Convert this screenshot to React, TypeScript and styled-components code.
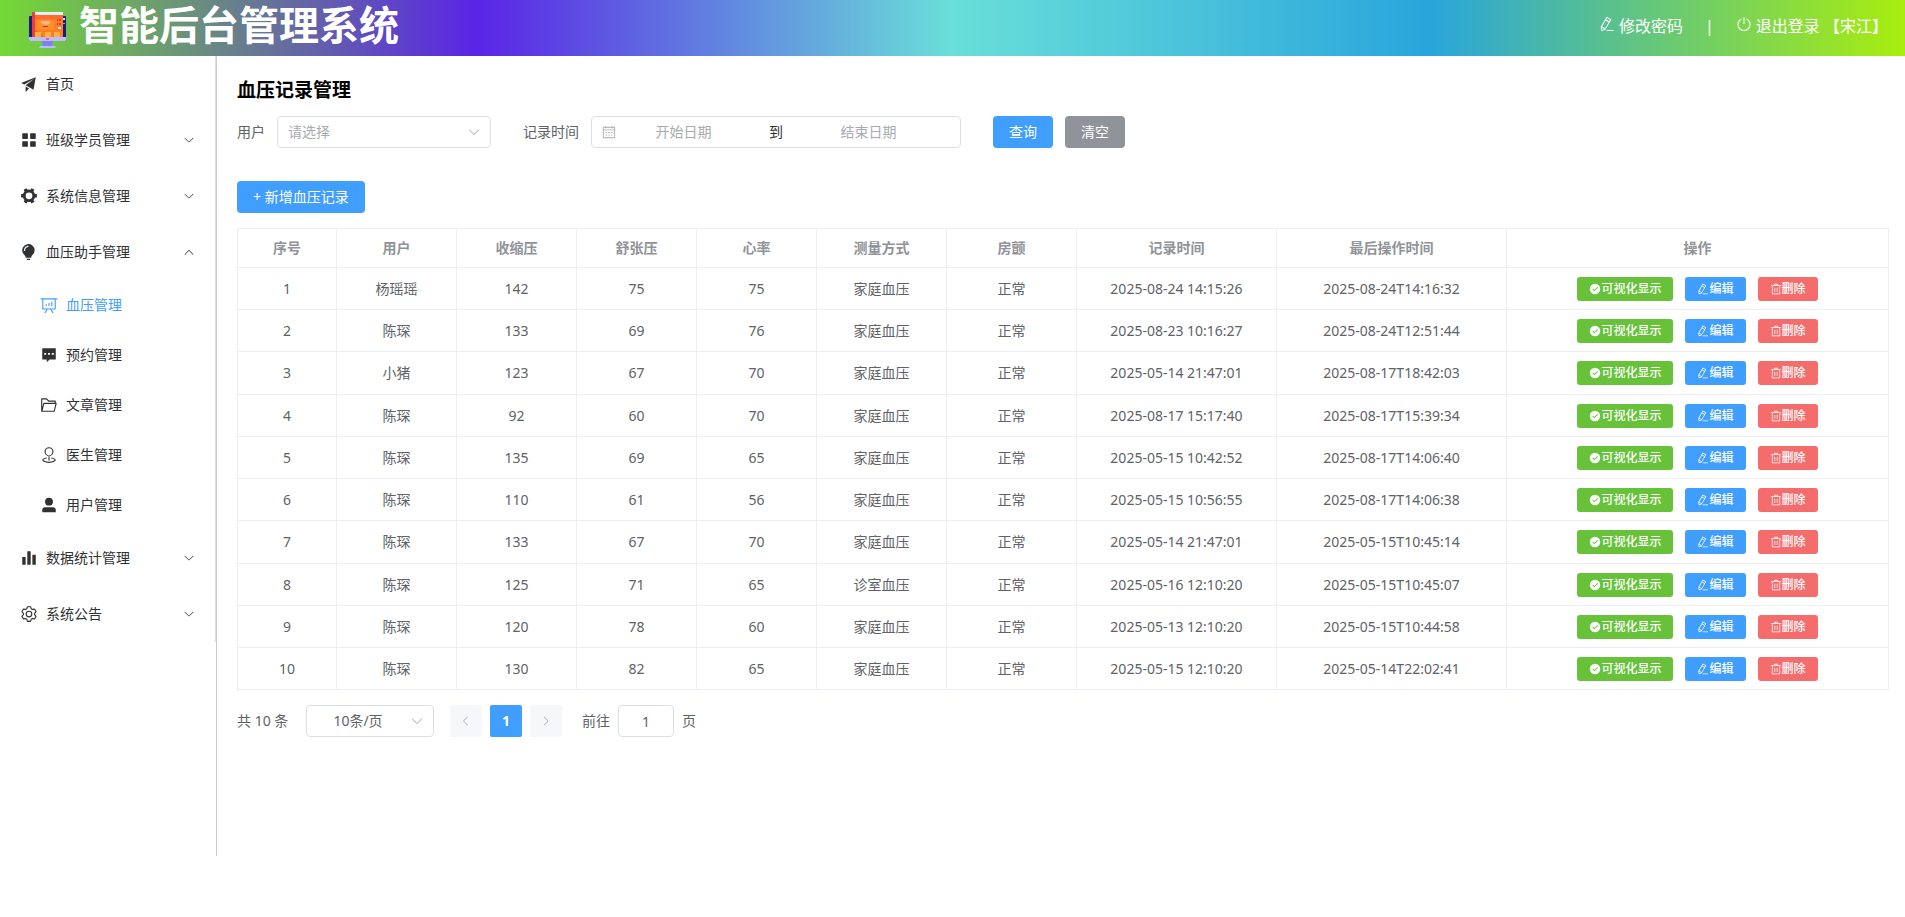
import React, { useState } from "react";
import styled, { createGlobalStyle, css } from "styled-components";

const GlobalStyle = createGlobalStyle`
  *, *::before, *::after { box-sizing: border-box; }
  body {
    margin: 0;
    background: #fff;
    color: #606266;
    font-family: "Noto Sans", "Noto Sans CJK SC", sans-serif;
    font-size: 14px;
    line-height: 20px;
  }
  button, input, select { font: inherit; }
`;

/* ---------- icons ---------- */

const ICONS: Record<string, string> = {
  promotion:
    "m64 448 832-320-128 704-446.08-243.328L832 192 242.816 545.472 64 448zm256 512V657.024L512 768 320 960z",
  menu:
    "M160 448a32 32 0 0 1-32-32V160a32 32 0 0 1 32-32h256a32 32 0 0 1 32 32v256a32 32 0 0 1-32 32H160zm448 0a32 32 0 0 1-32-32V160a32 32 0 0 1 32-32h256a32 32 0 0 1 32 32v256a32 32 0 0 1-32 32H608zM160 896a32 32 0 0 1-32-32V608a32 32 0 0 1 32-32h256a32 32 0 0 1 32 32v256a32 32 0 0 1-32 32H160zm448 0a32 32 0 0 1-32-32V608a32 32 0 0 1 32-32h256a32 32 0 0 1 32 32v256a32 32 0 0 1-32 32H608z",
  tools:
    "M764.416 254.72a351.68 351.68 0 0 1 86.336 149.184H960v192.064H850.752a351.68 351.68 0 0 1-86.336 149.312l54.72 94.72-166.272 96-54.592-94.72a352.64 352.64 0 0 1-172.48 0L371.136 936l-166.272-96 54.72-94.72a351.68 351.68 0 0 1-86.336-149.312H64v-192h109.248a351.68 351.68 0 0 1 86.336-149.312L204.8 160l166.208-96h.192l54.656 94.592a352.64 352.64 0 0 1 172.48 0L652.8 64h.128L819.2 160l-54.72 94.72zM704 499.968a192 192 0 1 0-384 0 192 192 0 0 0 384 0z",
  opportunity:
    "M384 960v-64h192.064v64H384zm448-544a350.656 350.656 0 0 1-128.32 271.424C665.344 719.04 640 763.776 640 813.504V832H320v-14.336c0-48-19.392-95.36-57.216-124.992a351.552 351.552 0 0 1-128.448-344.256c25.344-136.448 133.888-248.128 269.76-276.48A352.384 352.384 0 0 1 832 416zm-544 32c0-132.288 75.904-224 192-224v-64c-154.432 0-256 122.752-256 288h64z",
  board:
    "m665.216 768 110.848 192h-73.856L591.36 768H433.024L322.176 960H248.32l110.848-192H160a32 32 0 0 1-32-32V192H64a32 32 0 0 1 0-64h896a32 32 0 1 1 0 64h-64v544a32 32 0 0 1-32 32H665.216zM832 192H192v512h640V192zM352 448a32 32 0 0 1 32 32v64a32 32 0 0 1-64 0v-64a32 32 0 0 1 32-32zm160-64a32 32 0 0 1 32 32v128a32 32 0 0 1-64 0V416a32 32 0 0 1 32-32zm160-64a32 32 0 0 1 32 32v192a32 32 0 1 1-64 0V352a32 32 0 0 1 32-32z",
  comment:
    "M128 128h768v640H544L384 928V768H128V128zm112 264v112h112V392H240zm216 0v112h112V392H456zm216 0v112h112V392H672z",
  folder:
    "M878.08 448H241.92l-96 384h636.16l96-384zM832 384v-64H485.76L357.504 192H128v448l57.92-231.744A32 32 0 0 1 216.96 384H832zm-24.96 512H96a32 32 0 0 1-32-32V160a32 32 0 0 1 32-32h287.872l128.384 128H864a32 32 0 0 1 32 32v96h23.04a32 32 0 0 1 31.04 39.744l-112 448A32 32 0 0 1 807.04 896z",
  place:
    "M512 512a192 192 0 1 0 0-384 192 192 0 0 0 0 384zm0 64a256 256 0 1 1 0-512 256 256 0 0 1 0 512zM512 512a32 32 0 0 1 32 32v256a32 32 0 1 1-64 0V544a32 32 0 0 1 32-32zM384 649.088v64.96C269.76 732.352 192 771.904 192 800c0 37.696 139.904 96 320 96s320-58.304 320-96c0-28.16-77.76-67.648-192-85.952v-64.96C789.12 671.04 896 730.368 896 800c0 88.32-171.904 160-384 160s-384-71.68-384-160c0-69.696 106.88-128.96 256-150.912z",
  user:
    "M288 320a224 224 0 1 0 448 0 224 224 0 1 0-448 0zm544 608H160a32 32 0 0 1-32-32v-96a160 160 0 0 1 160-160h448a160 160 0 0 1 160 160v96a32 32 0 0 1-32 32z",
  histogram: "M416 896V128h192v768H416zm-288 0V448h192v448H128zm576 0V320h192v576H704z",
  setting:
    "M600.704 64a32 32 0 0 1 30.464 22.208l35.2 109.376c14.784 7.232 28.928 15.36 42.432 24.512l112.384-24.192a32 32 0 0 1 34.432 15.36L944.32 364.8a32 32 0 0 1-4.032 37.504l-77.12 85.12a357.12 357.12 0 0 1 0 49.024l77.12 85.248a32 32 0 0 1 4.032 37.504l-88.704 153.6a32 32 0 0 1-34.432 15.296L708.8 803.904c-13.44 9.088-27.648 17.28-42.368 24.512l-35.264 109.376A32 32 0 0 1 600.704 960H423.296a32 32 0 0 1-30.464-22.208L357.696 828.48a351.616 351.616 0 0 1-42.56-24.64l-112.32 24.256a32 32 0 0 1-34.432-15.36L79.68 659.2a32 32 0 0 1 4.032-37.504l77.12-85.248a357.12 357.12 0 0 1 0-48.896l-77.12-85.248A32 32 0 0 1 79.68 364.8l88.704-153.6a32 32 0 0 1 34.432-15.296l112.32 24.256c13.568-9.152 27.776-17.408 42.56-24.64l35.2-109.312A32 32 0 0 1 423.232 64H600.64zm-23.424 64H446.72l-36.352 113.088-24.512 11.968a294.113 294.113 0 0 0-34.816 20.096l-22.656 15.36-116.224-25.088-65.28 113.152 79.68 88.192-1.92 27.136a293.12 293.12 0 0 0 0 40.192l1.92 27.136-79.808 88.192 65.344 113.152 116.224-25.024 22.656 15.296a294.113 294.113 0 0 0 34.816 20.096l24.512 11.968L446.72 896h130.688l36.48-113.152 24.448-11.904a288.282 288.282 0 0 0 34.752-20.096l22.592-15.296 116.288 25.024 65.28-113.152-79.744-88.192 1.92-27.136a293.12 293.12 0 0 0 0-40.256l-1.92-27.136 79.808-88.128-65.344-113.152-116.288 24.96-22.592-15.232a287.616 287.616 0 0 0-34.752-20.096l-24.448-11.904L577.344 128zM512 320a192 192 0 1 1 0 384 192 192 0 0 1 0-384zm0 64a128 128 0 1 0 0 256 128 128 0 0 0 0-256z",
  down:
    "M831.872 340.864 512 652.672 192.128 340.864a30.592 30.592 0 0 0-42.752 0 29.12 29.12 0 0 0 0 41.6L489.664 714.24a32 32 0 0 0 44.672 0l340.288-331.712a29.12 29.12 0 0 0 0-41.728 30.592 30.592 0 0 0-42.752 0z",
  up:
    "m488.832 344.32-339.84 356.672a32 32 0 0 0 0 44.16l.384.384a29.44 29.44 0 0 0 42.688 0l320-335.872 319.872 335.872a29.44 29.44 0 0 0 42.688 0l.384-.384a32 32 0 0 0 0-44.16L535.168 344.32a32 32 0 0 0-46.336 0z",
  left:
    "M609.408 149.376 277.76 489.6a32 32 0 0 0 0 44.672l331.648 340.352a29.12 29.12 0 0 0 41.728 0 30.592 30.592 0 0 0 0-42.752L339.264 511.936l311.872-319.872a30.592 30.592 0 0 0 0-42.688 29.12 29.12 0 0 0-41.728 0z",
  right:
    "M340.864 149.312a30.592 30.592 0 0 0 0 42.752L652.736 512 340.864 831.872a30.592 30.592 0 0 0 0 42.752 29.12 29.12 0 0 0 41.728 0L714.24 534.336a32 32 0 0 0 0-44.672L382.592 149.376a29.12 29.12 0 0 0-41.728 0z",
  edit:
    "m199.04 672.64 193.984 112 224-387.968-193.92-112-224 388.032zm-23.872 60.16 32.896 148.288 144.896-45.696L175.168 732.8zM455.04 229.248l193.92 112 56.704-98.112-193.984-112-56.64 98.112zM104.32 708.8l384-665.024 304.768 175.936L409.152 884.8h.064l-248.448 78.336L104.32 708.8zm384 254.272v-64h448v64h-448z",
  power:
    "M352 159.872V230.4a352 352 0 1 0 320 0v-70.528A416.128 416.128 0 0 1 512 960a416 416 0 0 1-160-800.128zM512 64a32 32 0 0 1 32 32v384a32 32 0 0 1-64 0V96a32 32 0 0 1 32-32z",
  success:
    "M512 64a448 448 0 1 1 0 896 448 448 0 0 1 0-896zm-55.808 536.384-99.52-99.584a38.4 38.4 0 1 0-54.336 54.336l126.72 126.72a38.272 38.272 0 0 0 54.336 0l262.4-262.464a38.4 38.4 0 1 0-54.272-54.336L456.192 600.384z",
  trash:
    "M160 256H96a32 32 0 0 1 0-64h256V95.936a32 32 0 0 1 32-32h256a32 32 0 0 1 32 32V192h256a32 32 0 1 1 0 64h-64v672a32 32 0 0 1-32 32H192a32 32 0 0 1-32-32V256zm448-64v-64H416v64h192zM224 896h576V256H224v640zm192-128a32 32 0 0 1-32-32V416a32 32 0 0 1 64 0v320a32 32 0 0 1-32 32zm192 0a32 32 0 0 1-32-32V416a32 32 0 0 1 64 0v320a32 32 0 0 1-32 32z",
  calendar:
    "M128 384v512h768V192H768v32a32 32 0 1 1-64 0v-32H320v32a32 32 0 0 1-64 0v-32H128v128h768v64H128zm192-256h384V96a32 32 0 1 1 64 0v32h160a32 32 0 0 1 32 32v768a32 32 0 0 1-32 32H96a32 32 0 0 1-32-32V160a32 32 0 0 1 32-32h160V96a32 32 0 0 1 64 0v32zm-32 384h64a32 32 0 0 1 0 64h-64a32 32 0 0 1 0-64zm0 192h64a32 32 0 1 1 0 64h-64a32 32 0 1 1 0-64zm192-192h64a32 32 0 0 1 0 64h-64a32 32 0 0 1 0-64zm0 192h64a32 32 0 1 1 0 64h-64a32 32 0 1 1 0-64zm192-192h64a32 32 0 1 1 0 64h-64a32 32 0 1 1 0-64zm0 192h64a32 32 0 1 1 0 64h-64a32 32 0 1 1 0-64z",
};

const Svg = styled.svg`
  display: block;
  flex: none;
  fill: currentColor;
`;

function Icon({ name, size }: { name: string; size: number }) {
  return (
    <Svg viewBox="0 0 1024 1024" width={size} height={size} aria-hidden="true">
      <path d={ICONS[name]} fillRule="evenodd" />
    </Svg>
  );
}

function Logo() {
  return (
    <svg width="38" height="38" viewBox="0 0 38 38" aria-hidden="true">
      <rect x="0" y="5" width="37" height="25" rx="1" fill="#191d7c" />
      <rect x="34" y="7" width="2" height="2" fill="#dfe6ff" />
      <rect x="34" y="12" width="2" height="1" fill="#8f9cff" />
      <path d="M4 1h30v3H4z" fill="#e9f0f4" />
      <path d="M3 1h3v26H3z" fill="#ee3b3f" />
      <path d="M6 4h28v23H6z" fill="#ff7c29" />
      <path d="M6 4h28v4H6z" fill="#ff6a2d" />
      <path d="M8 9h17v10H8z" fill="#ff8f26" />
      <path d="M12 10h9c0 3-2 4-4 4s-5-1-5-4z" fill="#ffb19d" />
      <path d="M14 15h5v1h-5z" fill="#c9302c" />
      <path d="M28 8h1v2h-1zM30 8h2v2h-2zM28 12h1v2h-1zM30 12h2v2h-2z" fill="#d83a2e" />
      <rect x="29" y="16" width="3" height="2" fill="#9ff3f5" />
      <path d="M4 18l11 9H3z" fill="#e2452c" />
      <path d="M6 21h6v5H6zM16 21h6v5h-6zM25 21h6v5h-6z" fill="#ffb03a" />
      <path d="M0 26h37v3a1 1 0 0 1-1 1H1a1 1 0 0 1-1-1z" fill="#b9bcff" />
      <rect x="17" y="27" width="3" height="2" fill="#f05a8c" />
      <path d="M13 30h11l-1 5h-9z" fill="#7d80f0" />
      <path d="M11 35h15l1 2H10z" fill="#b9bcff" />
    </svg>
  );
}

/* ---------- header ---------- */

const Header = styled.header`
  display: flex;
  align-items: center;
  justify-content: space-between;
  height: 56px;
  padding: 0 17px 0 29px;
  color: #fff;
  background: linear-gradient(
    90deg,
    #75d935 0%,
    #5a24e6 25%,
    #69dfd9 50%,
    #29a5dc 75%,
    #a9ed0d 100%
  );
`;

const Brand = styled.div`
  display: flex;
  align-items: center;
  gap: 12px;
`;

const LogoBox = styled.span`
  display: flex;
  width: 38px;
  padding-top: 4px;
`;

const BrandName = styled.h1`
  margin: 0;
  padding-bottom: 6px;
  font-size: 40px;
  font-weight: 700;
  line-height: 50px;
`;

const UserNav = styled.nav`
  display: flex;
  align-items: center;
  gap: 22px;
  padding-bottom: 4px;
  font-size: 16px;
  line-height: 24px;
`;

const NavLink = styled.a`
  display: flex;
  align-items: center;
  gap: 4px;
  color: inherit;
  text-decoration: none;
`;

const NavIcon = styled.span`
  padding-bottom: 4px;
`;

/* ---------- side menu ---------- */

const Body = styled.div`
  display: flex;
  align-items: flex-start;
`;

const Sidebar = styled.aside`
  flex: none;
  width: 217px;
  min-height: 800px;
  border-right: 1px solid #ccc;
`;

const MenuList = styled.ul`
  margin: 0;
  padding: 0;
  list-style: none;
  border-right: 1px solid #dcdfe6;
`;

const SubList = styled.ul`
  margin: 0;
  padding: 0;
  list-style: none;
`;

const menuItem = css`
  display: flex;
  align-items: center;
  width: 100%;
  border: 0;
  background: none;
  color: #303133;
  text-align: left;
  text-decoration: none;
  cursor: pointer;
`;

const MenuButton = styled.button`
  ${menuItem}
  height: 56px;
  padding: 0 20px 0 17px;
`;

const MenuLink = styled.a`
  ${menuItem}
  height: 56px;
  padding: 0 20px 0 17px;
`;

const SubLink = styled.a<{ $active: boolean }>`
  ${menuItem}
  height: 50px;
  padding: 0 20px 0 37px;
  color: ${(p) => (p.$active ? "#409eff" : "#303133")};
`;

const MenuIcon = styled.span`
  display: flex;
  justify-content: center;
  width: 24px;
  margin-right: 5px;
`;

const MenuText = styled.span`
  flex: 1;
`;

/* ---------- content ---------- */

const Main = styled.main`
  flex: 1;
  min-width: 0;
  padding: 21px 16px 20px 20px;
`;

const PageTitle = styled.h2`
  margin: 0 0 12px;
  color: #000;
  font-size: 19px;
  font-weight: 700;
  line-height: 27px;
`;

const Filters = styled.form`
  display: flex;
  align-items: center;
  margin-bottom: 33px;
`;

const Field = styled.div`
  display: flex;
  align-items: center;
  gap: 12px;
  margin-right: 32px;
`;

const ButtonGroup = styled.div`
  display: flex;
  justify-content: center;
  gap: 12px;
`;

const SelectBox = styled.span<{ $width: number }>`
  position: relative;
  display: flex;
  width: ${(p) => p.$width}px;
`;

const SelectArrow = styled.span`
  position: absolute;
  top: 9px;
  right: 10px;
  color: #a8abb2;
  pointer-events: none;
`;

const Select = styled.select<{ $centered?: boolean }>`
  appearance: none;
  width: 100%;
  height: 32px;
  padding: 0 ${(p) => (p.$centered ? 32 : 30)}px 0 ${(p) => (p.$centered ? 8 : 10)}px;
  border: 1px solid #dcdfe6;
  border-radius: 4px;
  background: #fff;
  color: ${(p) => (p.$centered ? "#606266" : "#a8abb2")};
  text-align-last: ${(p) => (p.$centered ? "center" : "left")};
`;

const DateRange = styled.div`
  display: flex;
  align-items: center;
  width: 370px;
  height: 32px;
  padding: 0 10px;
  border: 1px solid #dcdfe6;
  border-radius: 4px;
  color: #a8abb2;
`;

const DateInput = styled.input`
  flex: 1;
  min-width: 0;
  padding: 0;
  border: 0;
  outline: 0;
  background: none;
  color: #606266;
  text-align: center;
  &::placeholder {
    color: #a8abb2;
    opacity: 1;
  }
`;

const RangeWord = styled.span`
  width: 50px;
  color: #303133;
  text-align: center;
`;

const ClearSlot = styled.span`
  width: 14px;
`;

const TONES = {
  primary: "#409eff",
  info: "#909399",
  success: "#67c23a",
  danger: "#f56c6c",
};

const Button = styled.button<{ $tone: keyof typeof TONES; $small?: boolean }>`
  display: inline-flex;
  align-items: center;
  justify-content: center;
  height: ${(p) => (p.$small ? 24 : 32)}px;
  padding: 0 ${(p) => (p.$small ? 12 : 16)}px;
  border: 0;
  border-radius: ${(p) => (p.$small ? 3 : 4)}px;
  background: ${(p) => TONES[p.$tone]};
  color: #fff;
  font-size: ${(p) => (p.$small ? 12 : 14)}px;
  font-weight: ${(p) => (p.$small ? 500 : 400)};
  white-space: nowrap;
  cursor: pointer;
`;

const Table = styled.table`
  width: 100%;
  margin: 15px 0 15px;
  border: 1px solid #ebeef5;
  border-width: 1px 0 0 1px;
  border-spacing: 0;
  table-layout: fixed;
  text-align: center;
`;

const Col = styled.col<{ $width?: number }>`
  width: ${(p) => (p.$width ? `${p.$width}px` : "auto")};
`;

const Th = styled.th`
  height: 39px;
  padding: 0;
  border: 1px solid #ebeef5;
  border-width: 0 1px 1px 0;
  color: #909399;
  font-weight: 700;
`;

const Td = styled.td`
  height: 42px;
  padding: 0;
  border: 1px solid #ebeef5;
  border-width: 0 1px 1px 0;
`;

const Row = styled.tr`
  &:nth-child(4n + 3) ${Td} {
    height: 43px;
  }
`;

const Pagination = styled.div`
  display: flex;
  align-items: center;
  gap: 16px;
`;

const Total = styled.span`
  min-width: 53px;
`;

const Pager = styled.div`
  display: flex;
  gap: 8px;
`;

const PageButton = styled.button<{ $current?: boolean }>`
  display: flex;
  align-items: center;
  justify-content: center;
  width: 32px;
  height: 32px;
  padding: 0;
  border: 0;
  border-radius: 2px;
  background: ${(p) => (p.$current ? "#409eff" : "#f5f7fa")};
  color: ${(p) => (p.$current ? "#fff" : "#a8abb2")};
  font-weight: 700;
`;

const Jumper = styled.label`
  display: flex;
  align-items: center;
  gap: 8px;
  padding-left: 4px;
`;

const JumpInput = styled.input`
  width: 56px;
  height: 32px;
  padding: 0 8px;
  border: 1px solid #dcdfe6;
  border-radius: 4px;
  color: #606266;
  text-align: center;
`;

/* ---------- data ---------- */

const SUB_MENU = [
  { icon: "board", text: "血压管理" },
  { icon: "comment", text: "预约管理" },
  { icon: "folder", text: "文章管理" },
  { icon: "place", text: "医生管理" },
  { icon: "user", text: "用户管理" },
];

const MENU = [
  { icon: "menu", text: "班级学员管理" },
  { icon: "tools", text: "系统信息管理" },
  { icon: "opportunity", text: "血压助手管理", children: SUB_MENU },
  { icon: "histogram", text: "数据统计管理" },
  { icon: "setting", text: "系统公告" },
];

const COLUMNS: { title: string; width?: number }[] = [
  { title: "序号", width: 99 },
  { title: "用户", width: 120 },
  { title: "收缩压", width: 120 },
  { title: "舒张压", width: 120 },
  { title: "心率", width: 120 },
  { title: "测量方式", width: 130 },
  { title: "房颤", width: 130 },
  { title: "记录时间", width: 200 },
  { title: "最后操作时间", width: 230 },
  { title: "操作" },
];

const RECORDS = [
  ["杨瑶瑶", "142", "75", "75", "家庭血压", "正常", "2025-08-24 14:15:26", "2025-08-24T14:16:32"],
  ["陈琛", "133", "69", "76", "家庭血压", "正常", "2025-08-23 10:16:27", "2025-08-24T12:51:44"],
  ["小猪", "123", "67", "70", "家庭血压", "正常", "2025-05-14 21:47:01", "2025-08-17T18:42:03"],
  ["陈琛", "92", "60", "70", "家庭血压", "正常", "2025-08-17 15:17:40", "2025-08-17T15:39:34"],
  ["陈琛", "135", "69", "65", "家庭血压", "正常", "2025-05-15 10:42:52", "2025-08-17T14:06:40"],
  ["陈琛", "110", "61", "56", "家庭血压", "正常", "2025-05-15 10:56:55", "2025-08-17T14:06:38"],
  ["陈琛", "133", "67", "70", "家庭血压", "正常", "2025-05-14 21:47:01", "2025-05-15T10:45:14"],
  ["陈琛", "125", "71", "65", "诊室血压", "正常", "2025-05-16 12:10:20", "2025-05-15T10:45:07"],
  ["陈琛", "120", "78", "60", "家庭血压", "正常", "2025-05-13 12:10:20", "2025-05-15T10:44:58"],
  ["陈琛", "130", "82", "65", "家庭血压", "正常", "2025-05-15 12:10:20", "2025-05-14T22:02:41"],
];

/* ---------- sections ---------- */

function SideMenu() {
  const [open, setOpen] = useState("血压助手管理");
  return (
    <Sidebar>
      <MenuList>
        <li>
          <MenuLink href="#home">
            <MenuIcon><Icon name="promotion" size={18} /></MenuIcon>
            <MenuText>首页</MenuText>
          </MenuLink>
        </li>
        {MENU.map((item) => {
          const expanded = open === item.text;
          return (
            <li key={item.text}>
              <MenuButton
                type="button"
                aria-expanded={expanded}
                onClick={() => setOpen(expanded ? "" : item.text)}
              >
                <MenuIcon><Icon name={item.icon} size={18} /></MenuIcon>
                <MenuText>{item.text}</MenuText>
                <Icon name={expanded ? "up" : "down"} size={12} />
              </MenuButton>
              {expanded && item.children && (
                <SubList>
                  {item.children.map((sub, i) => (
                    <li key={sub.text}>
                      <SubLink href="#page" $active={i === 0}>
                        <MenuIcon><Icon name={sub.icon} size={18} /></MenuIcon>
                        <MenuText>{sub.text}</MenuText>
                      </SubLink>
                    </li>
                  ))}
                </SubList>
              )}
            </li>
          );
        })}
      </MenuList>
    </Sidebar>
  );
}

function FilterBar() {
  return (
    <Filters onSubmit={(e) => e.preventDefault()}>
      <Field>
        <label htmlFor="user">用户</label>
        <SelectBox $width={214}>
          <Select id="user" defaultValue="">
            <option value="">请选择</option>
          </Select>
          <SelectArrow><Icon name="down" size={14} /></SelectArrow>
        </SelectBox>
      </Field>
      <Field>
        <label htmlFor="start">记录时间</label>
        <DateRange>
          <Icon name="calendar" size={14} />
          <DateInput id="start" placeholder="开始日期" />
          <RangeWord>到</RangeWord>
          <DateInput aria-label="结束日期" placeholder="结束日期" />
          <ClearSlot />
        </DateRange>
      </Field>
      <ButtonGroup>
        <Button $tone="primary" type="submit">查询</Button>
        <Button $tone="info" type="reset">清空</Button>
      </ButtonGroup>
    </Filters>
  );
}

function RecordTable() {
  return (
    <Table>
      <colgroup>
        {COLUMNS.map((c) => <Col key={c.title} $width={c.width} />)}
      </colgroup>
      <thead>
        <tr>{COLUMNS.map((c) => <Th key={c.title} scope="col">{c.title}</Th>)}</tr>
      </thead>
      <tbody>
        {RECORDS.map((record, i) => (
          <Row key={i}>
            <Td>{i + 1}</Td>
            {record.map((value, j) => <Td key={j}>{value}</Td>)}
            <Td>
              <ButtonGroup>
                <Button type="button" $small $tone="success"><Icon name="success" size={12} />可视化显示</Button>
                <Button type="button" $small $tone="primary"><Icon name="edit" size={12} />编辑</Button>
                <Button type="button" $small $tone="danger"><Icon name="trash" size={12} />删除</Button>
              </ButtonGroup>
            </Td>
          </Row>
        ))}
      </tbody>
    </Table>
  );
}

function Paging() {
  return (
    <Pagination>
      <Total>共 10 条</Total>
      <SelectBox $width={128}>
        <Select $centered aria-label="每页条数" defaultValue="10">
          <option value="10">10条/页</option>
        </Select>
        <SelectArrow><Icon name="down" size={14} /></SelectArrow>
      </SelectBox>
      <Pager>
        <PageButton type="button" aria-label="上一页" disabled><Icon name="left" size={12} /></PageButton>
        <PageButton type="button" $current>1</PageButton>
        <PageButton type="button" aria-label="下一页" disabled><Icon name="right" size={12} /></PageButton>
      </Pager>
      <Jumper>
        前往
        <JumpInput defaultValue="1" />
        页
      </Jumper>
    </Pagination>
  );
}

export default function App() {
  return (
    <>
      <GlobalStyle />
      <Header>
        <Brand>
          <LogoBox><Logo /></LogoBox>
          <BrandName>智能后台管理系统</BrandName>
        </Brand>
        <UserNav>
          <NavLink href="#password">
            <NavIcon><Icon name="edit" size={16} /></NavIcon>
            修改密码
          </NavLink>
          <span>|</span>
          <NavLink href="#logout">
            <NavIcon><Icon name="power" size={16} /></NavIcon>
            退出登录 【宋江】
          </NavLink>
        </UserNav>
      </Header>
      <Body>
        <SideMenu />
        <Main>
          <PageTitle>血压记录管理</PageTitle>
          <FilterBar />
          <Button $tone="primary" type="button">+ 新增血压记录</Button>
          <RecordTable />
          <Paging />
        </Main>
      </Body>
    </>
  );
}
